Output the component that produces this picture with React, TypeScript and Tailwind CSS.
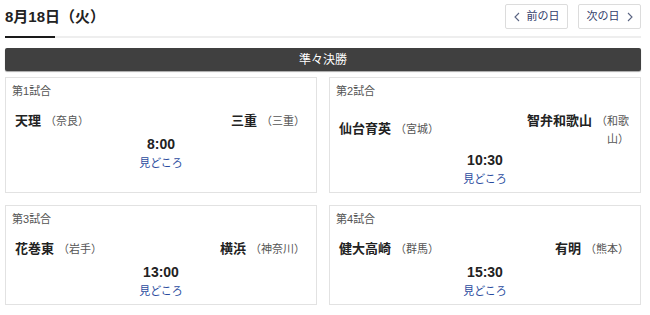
const font = { fontFamily: '"Liberation Sans", "Noto Sans CJK JP", sans-serif' };

type Team = { name: string; pref: string };
type Game = { no: number; home: Team; away: Team; time: string };

const games: Game[] = [
  { no: 1, home: { name: '天理', pref: '（奈良）' }, away: { name: '三重', pref: '（三重）' }, time: '8:00' },
  { no: 2, home: { name: '仙台育英', pref: '（宮城）' }, away: { name: '智弁和歌山', pref: '（和歌山）' }, time: '10:30' },
  { no: 3, home: { name: '花巻東', pref: '（岩手）' }, away: { name: '横浜', pref: '（神奈川）' }, time: '13:00' },
  { no: 4, home: { name: '健大高崎', pref: '（群馬）' }, away: { name: '有明', pref: '（熊本）' }, time: '15:30' },
];

function TeamName({ team, right }: { team: Team; right?: boolean }) {
  return (
    <div className={`flex items-baseline gap-[4px] max-w-[102px] ${right ? 'justify-end' : ''}`}>
      <span className="text-[13px] leading-[22px] font-bold text-[#222] whitespace-nowrap">{team.name}</span>
      <span className={`text-[11px] leading-[18px] text-[#555] ${right ? 'text-right' : ''}`}>{team.pref}</span>
    </div>
  );
}

function GameCard({ game }: { game: Game }) {
  return (
    <div className="border border-[#e2e2e2] bg-white px-[6px] pt-[5px] pb-[4px] flex flex-col">
      <div className="text-[11px] leading-[17px] text-[#555]">第{game.no}試合</div>
      <div className="mt-[10px] flex items-center justify-between pl-[3px] pr-[5px]">
        <TeamName team={game.home} />
        <TeamName team={game.away} right />
      </div>
      <div className="mt-[2px] text-center text-[14px] leading-[20px] font-bold text-[#222]">{game.time}</div>
      <div className="text-center text-[11px] leading-[18px] text-[#2a4b9e]">見どころ</div>
    </div>
  );
}

export default function App() {
  return (
    <div className="w-[650px] h-[315px] bg-white overflow-hidden" style={font}>
      <div className="ml-[5px] w-[636px]">
        <div className="flex justify-between items-start h-[36px]">
          <div className="pt-[7px] text-[15px] leading-[20px] font-bold text-[#222]">8月18日（火）</div>
          <div className="flex gap-[10px] mt-[4px]">
            <button className="h-[25px] w-[63px] border border-[#dcdcdc] rounded-[2px] bg-white flex items-center justify-center gap-[7px] text-[11px] text-[#33406b]">
              <svg width="6" height="10" viewBox="0 0 6 10" fill="none">
                <path d="M5 1L1 5L5 9" stroke="#5a6482" strokeWidth="1.1" />
              </svg>
              前の日
            </button>
            <button className="h-[25px] w-[63px] border border-[#dcdcdc] rounded-[2px] bg-white flex items-center justify-center gap-[7px] text-[11px] text-[#33406b]">
              次の日
              <svg width="6" height="10" viewBox="0 0 6 10" fill="none">
                <path d="M1 1L5 5L1 9" stroke="#5a6482" strokeWidth="1.1" />
              </svg>
            </button>
          </div>
        </div>
        <div className="h-[2px] bg-[#eeeeee] flex">
          <div className="w-[50px] bg-[#1a1a1a]" />
        </div>
        <div className="mt-[10px] h-[23px] rounded-[2px] bg-[#404040] shadow-[0_1px_1px_rgba(0,0,0,0.35)] flex items-center justify-center text-[12px] text-white">
          準々決勝
        </div>
        <div className="mt-[6px] grid grid-cols-2 gap-[12px]">
          {games.map((g) => (
            <GameCard key={g.no} game={g} />
          ))}
        </div>
      </div>
    </div>
  );
}
